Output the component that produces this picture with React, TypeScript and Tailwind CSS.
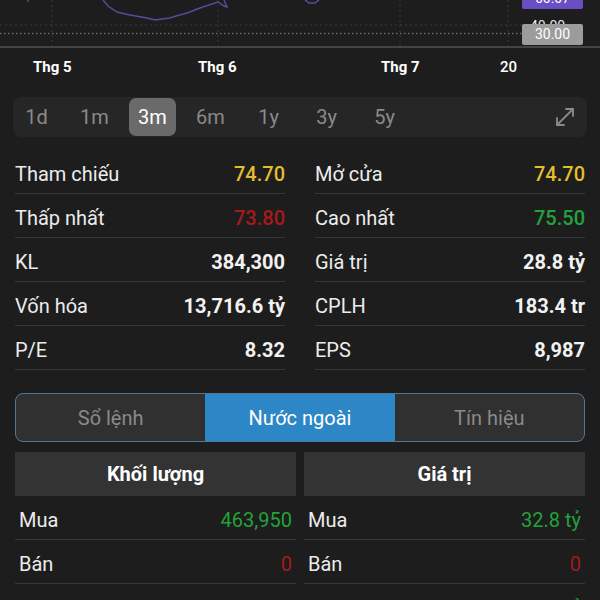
const stats = [
  { l: "Tham chiếu", v: "74.70", c: "text-[#e3bd2c] font-medium", l2: "Mở cửa", v2: "74.70", c2: "text-[#e3bd2c] font-medium" },
  { l: "Thấp nhất", v: "73.80", c: "text-[#a8191c] font-medium", l2: "Cao nhất", v2: "75.50", c2: "text-[#24a23a] font-medium" },
  { l: "KL", v: "384,300", c: "text-[#f2f2f2] font-bold", l2: "Giá trị", v2: "28.8 tỷ", c2: "text-[#f2f2f2] font-bold" },
  { l: "Vốn hóa", v: "13,716.6 tỷ", c: "text-[#f2f2f2] font-bold", l2: "CPLH", v2: "183.4 tr", c2: "text-[#f2f2f2] font-bold" },
  { l: "P/E", v: "8.32", c: "text-[#f2f2f2] font-bold", l2: "EPS", v2: "8,987", c2: "text-[#f2f2f2] font-bold" },
];

const ranges = ["1d", "1m", "3m", "6m", "1y", "3y", "5y"];

function StatCell({ label, value, cls }: { label: string; value: string; cls: string }) {
  return (
    <div className="flex h-[44px] items-center justify-between border-b border-[#383838] pt-[4px]">
      <span className="text-[#ececec]">{label}</span>
      <span className={cls}>{value}</span>
    </div>
  );
}

function ForeignCell({ label, value, cls }: { label: string; value: string; cls: string }) {
  return (
    <div className="flex h-[44px] items-center justify-between border-b border-[#383838] px-[4px] pt-[5px]">
      <span className="text-[#ececec]">{label}</span>
      <span className={cls}>{value}</span>
    </div>
  );
}

export default function App() {
  return (
    <div className="h-[600px] w-[600px] overflow-hidden bg-[#1d1d1d] font-['Roboto',sans-serif] text-[20px]">
      {/* chart tail */}
      <div className="relative h-[48px] border-b-2 border-[#444]">
        <svg className="absolute left-0 top-0" width="522" height="48" viewBox="0 0 522 48">
          <g stroke="#3a3a3a" strokeWidth="1" strokeDasharray="2 3">
            <line x1="52" y1="0" x2="52" y2="46" />
            <line x1="218" y1="0" x2="218" y2="46" />
            <line x1="400" y1="0" x2="400" y2="46" />
            <line x1="508" y1="0" x2="508" y2="46" />
            <line x1="0" y1="25" x2="522" y2="25" />
          </g>
          <line x1="0" y1="33.5" x2="522" y2="33.5" stroke="#6a6a6a" strokeWidth="1.5" strokeDasharray="1.5 2.5" />
          <path
            d="M103 0 L108 6 L117 12 L130 15 L147 18 L155 20 L162 19 L170 18 L176 16 L187 13 L200 8 L212 4 L218 2 L224 6 L227 7 L224 0"
            fill="none"
            stroke="#5a4a9c"
            strokeWidth="1.5"
          />
          <path d="M305 0 L309 3 L315 3 L319 0" fill="none" stroke="#5a4a9c" strokeWidth="1.5" />
          <line x1="28" y1="0" x2="28" y2="2" stroke="#5a4a9c" strokeWidth="1.5" />
        </svg>
        <span className="absolute left-[530px] top-[19px] text-[14px] leading-none text-[#e8e8e8]">40.00</span>
        <div className="absolute left-[522px] top-[-12px] flex h-[21px] w-[61px] items-center justify-center rounded-[2px] bg-[#6a4ec4] text-[14px] text-white">
          60.07
        </div>
        <div className="absolute left-[522px] top-[24px] flex h-[21px] w-[61px] items-center justify-center rounded-[2px] bg-[#9c9c9c] text-[14px] text-white">
          30.00
        </div>
      </div>

      {/* axis */}
      <div className="relative h-[49px] text-[15px] font-bold text-white">
        <span className="absolute left-[33px] top-[8px]">Thg 5</span>
        <span className="absolute left-[198px] top-[8px]">Thg 6</span>
        <span className="absolute left-[381px] top-[8px]">Thg 7</span>
        <span className="absolute left-[500px] top-[8px] font-medium">20</span>
      </div>

      {/* ranges */}
      <div className="mx-[13px] flex h-[40px] items-center gap-[11px] rounded-[8px] bg-[#262626] pr-[10px]">
        {ranges.map((r) => (
          <div
            key={r}
            className={
              r === "3m"
                ? "flex h-[38px] w-[47px] items-center justify-center rounded-[7px] bg-[#6a6a6a] text-white"
                : "flex h-[38px] w-[47px] items-center justify-center text-[#8a8a8a]"
            }
          >
            {r}
          </div>
        ))}
        <div className="ml-auto text-[#8a8a8a]">
          <svg width="24" height="24" viewBox="0 0 24 24" fill="none" stroke="currentColor" strokeWidth="1.8" strokeLinecap="round" strokeLinejoin="round">
            <polyline points="13 4 20 4 20 11" />
            <polyline points="11 20 4 20 4 13" />
            <line x1="20" y1="4" x2="4" y2="20" />
          </svg>
        </div>
      </div>

      {/* stats */}
      <div className="mx-[15px] mt-[13px] grid grid-cols-2 gap-x-[30px]">
        {stats.map((s) => (
          <div key={s.l} className="contents">
            <StatCell label={s.l} value={s.v} cls={s.c} />
            <StatCell label={s.l2} value={s.v2} cls={s.c2} />
          </div>
        ))}
      </div>

      {/* tabs */}
      <div className="mx-[15px] mt-[23px] grid h-[49px] grid-cols-3 overflow-hidden rounded-[8px] border border-[#4d7898] bg-[#303030]">
        <div className="flex items-center justify-center text-[#8a8a8a]">Sổ lệnh</div>
        <div className="flex items-center justify-center bg-[#2d86c6] text-white">Nước ngoài</div>
        <div className="flex items-center justify-center text-[#8a8a8a]">Tín hiệu</div>
      </div>

      {/* foreign */}
      <div className="mx-[15px] mt-[10px] grid grid-cols-2 gap-x-[8px]">
        <div className="flex h-[44px] items-center justify-center bg-[#333333] font-bold text-white">Khối lượng</div>
        <div className="flex h-[44px] items-center justify-center bg-[#333333] font-bold text-white">Giá trị</div>
        <ForeignCell label="Mua" value="463,950" cls="text-[#24a23a]" />
        <ForeignCell label="Mua" value="32.8 tỷ" cls="text-[#24a23a]" />
        <ForeignCell label="Bán" value="0" cls="text-[#a8191c]" />
        <ForeignCell label="Bán" value="0" cls="text-[#a8191c]" />
        <ForeignCell label="Ròng" value="463,950" cls="text-[#24a23a]" />
        <ForeignCell label="Ròng" value="32.8 tỷ" cls="text-[#24a23a]" />
      </div>
    </div>
  );
}
